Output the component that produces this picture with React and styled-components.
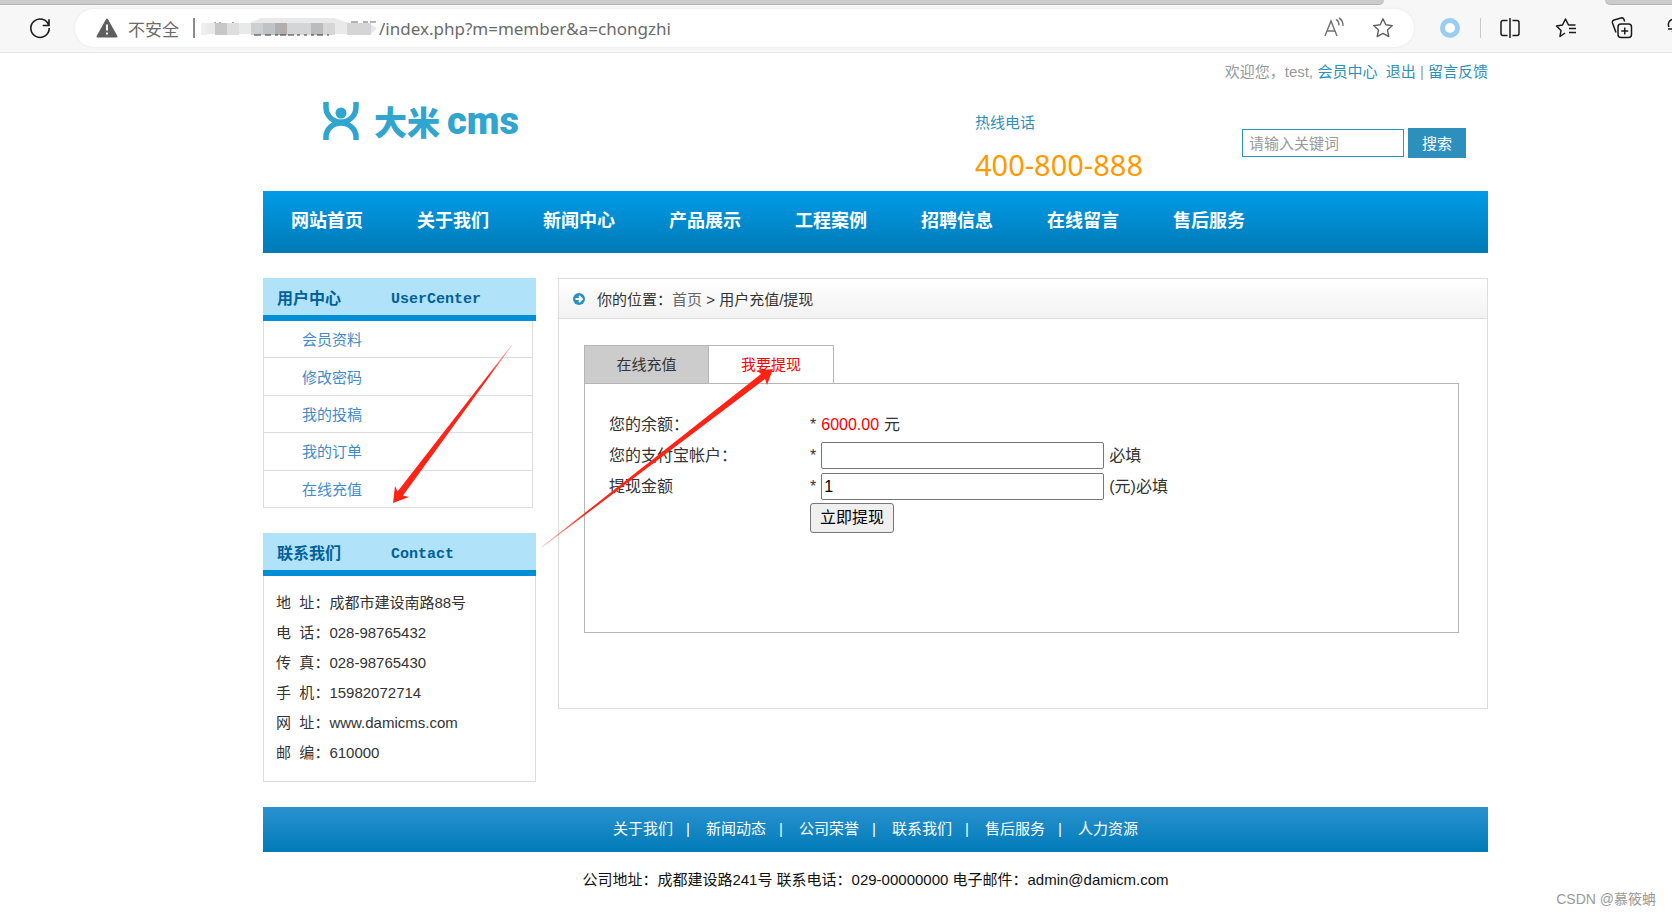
import React, { useState } from 'react'
import styled, { createGlobalStyle } from 'styled-components'

const GlobalStyle = createGlobalStyle`
  * {
    box-sizing: border-box;
  }
  body {
    margin: 0;
    background: #fff;
    color: #333;
    font-family: "Liberation Sans", "Noto Sans CJK SC", sans-serif;
    font-size: 15px;
  }
  a {
    text-decoration: none;
  }
`

const menus = ['网站首页', '关于我们', '新闻中心', '产品展示', '工程案例', '招聘信息', '在线留言', '售后服务']
const userLinks = ['会员资料', '修改密码', '我的投稿', '我的订单', '在线充值']
const contacts = [
  ['地', '址', '成都市建设南路88号'],
  ['电', '话', '028-98765432'],
  ['传', '真', '028-98765430'],
  ['手', '机', '15982072714'],
  ['网', '址', 'www.damicms.com'],
  ['邮', '编', '610000'],
]
const footLinks = ['关于我们', '新闻动态', '公司荣誉', '联系我们', '售后服务', '人力资源']

const Browser = () => (
  <BrowserBar>
    <TabStrip>
      <TabEdge $grow />
      <TabEdge />
    </TabStrip>
    <Tools>
      <IconButton aria-label="reload">
        <svg width="24" height="24" viewBox="0 0 24 24" fill="none" stroke="#1b1b1b" strokeWidth="1.6">
          <path d="M20.8 9.5A9.2 9.2 0 1 0 21.2 12M21 3.2v6.3h-6.3" />
        </svg>
      </IconButton>
      <AddressBar>
        <svg width="22" height="20" viewBox="0 0 22 20">
          <path d="M11 1.5 20.5 18.5H1.5Z" fill="#5f5f5f" stroke="#5f5f5f" strokeWidth="2" strokeLinejoin="round" />
          <path d="M11 6.5v6M11 14.5v2" stroke="#fff" strokeWidth="2" />
        </svg>
        <Unsafe>不安全</Unsafe>
        <Bar />
        <Mosaic width="180" height="20" viewBox="0 0 180 20">
          <path d="M16 4v3M21 4v3M34 4v3" stroke="#555" />
          <path d="M152 4h7M164 4h5M171 4h6" stroke="#999" strokeWidth="1.5" />
          <path d="M2 5H50L62 0H135L150 5H170L178 10L172 16H2Z" fill="#e9e9e9" />
          <rect x="2" y="5" width="6" height="12" fill="#eeeeee" />
          <rect x="16" y="5" width="12" height="12" fill="#c6c8c8" />
          <rect x="28" y="5" width="12" height="12" fill="#dedede" />
          <rect x="52" y="5" width="12" height="12" fill="#cdd0d1" />
          <rect x="64" y="5" width="12" height="12" fill="#bfc2c7" />
          <rect x="76" y="5" width="12" height="12" fill="#b2aeae" />
          <rect x="88" y="5" width="24" height="12" fill="#d3d5d6" />
          <rect x="112" y="5" width="12" height="12" fill="#bcbcbc" />
          <rect x="124" y="5" width="12" height="12" fill="#d6d6d6" />
          <rect x="148" y="5" width="24" height="12" fill="#d5d5d5" />
          <path d="M55 17h7M66 17h6M76 17h3M81 17h6M89 17h6M98 17h3M105 17h3M112 17h3M118 17h6M128 17h2" stroke="#333" strokeWidth="1" />
        </Mosaic>
        <Url>/index.php?m=member&amp;a=chongzhi</Url>
        <IconButton aria-label="read aloud">
          <svg width="22" height="22" viewBox="0 0 22 22" fill="none" stroke="#707070" strokeWidth="1.4">
            <path d="M2 19 8 4l6 15M4 14h8M13 2.5c2 1 3 3 3 6M16 1c3 1.5 4 4 4 8" />
          </svg>
        </IconButton>
        <IconButton aria-label="favorite">
          <Star color="#606060" />
        </IconButton>
      </AddressBar>
      <IconButton aria-label="extension">
        <svg width="20" height="20" viewBox="0 0 20 20">
          <circle cx="10" cy="10" r="7.5" fill="#fff" stroke="#99cdf1" strokeWidth="5" />
        </svg>
      </IconButton>
      <Divider />
      <Actions>
        <IconButton aria-label="split screen">
          <svg width="22" height="22" viewBox="0 0 22 22" fill="none" stroke="#1b1b1b" strokeWidth="1.5">
            <path d="M8.5 3.5H4a2 2 0 0 0-2 2v11a2 2 0 0 0 2 2h4.5M13.5 3.5H18a2 2 0 0 1 2 2v11a2 2 0 0 1-2 2h-4.5M11 1v20" />
          </svg>
        </IconButton>
        <IconButton aria-label="favorites list">
          <svg width="22" height="22" viewBox="0 0 22 22" fill="none" stroke="#1b1b1b" strokeWidth="1.5" strokeLinejoin="round">
            <path d="M10 16 5 19.5l1-6L1.5 9l6-1L10.5 2l3 6h7M14 11.5h7M14 15.5h7" />
          </svg>
        </IconButton>
        <IconButton aria-label="collections">
          <svg width="22" height="22" viewBox="0 0 22 22" fill="none" stroke="#1b1b1b" strokeWidth="1.5">
            <rect x="7" y="7" width="13.5" height="13.5" rx="3" />
            <path d="M13.75 10.5v7M10.25 14h7M5 15.5 1.5 6a2.5 2.5 0 0 1 1.5-3l7-2a2.5 2.5 0 0 1 3 1.5l.7 2" />
          </svg>
        </IconButton>
        <IconButton aria-label="essentials">
          <svg width="22" height="22" viewBox="0 0 22 22" fill="none" stroke="#1b1b1b" strokeWidth="1.5">
            <path d="M2 10a5 5 0 0 1 9-5 5 5 0 0 1 9 5M1 12h5l2-3 3 6 2-3M5 14l6 6 6-6" />
          </svg>
        </IconButton>
      </Actions>
    </Tools>
  </BrowserBar>
)

const Star = ({ color }) => (
  <svg width="22" height="22" viewBox="0 0 22 22" fill="none" stroke={color} strokeWidth="1.4" strokeLinejoin="round">
    <path d="m11 1.8 2.8 6 6.5.8-4.8 4.5 1.3 6.5L11 16.4l-5.8 3.2 1.3-6.5L1.7 8.6l6.5-.8Z" />
  </svg>
)

const Header = () => (
  <Top>
    <Welcome>
      欢迎您，test, <BlueLink href="#">会员中心</BlueLink>&nbsp; <BlueLink href="#">退出</BlueLink> | <BlueLink href="#">留言反馈</BlueLink>
    </Welcome>
    <Brand>
      <Logo href="#">
        <svg width="36" height="38" viewBox="0 0 36 38" fill="none" stroke="#2fa5cf">
          <path d="M3 0v5c0 9 7 15 15 15s15-6 15-15V0M3 38v-3c0-8 7-14 15-14s15 6 15 14v3" strokeWidth="5.5" />
          <circle cx="18" cy="11" r="5.5" fill="#2fa5cf" stroke="none" />
        </svg>
        <LogoName>大米</LogoName>
        <LogoCms>cms</LogoCms>
      </Logo>
      <Hotline>
        <span>热线电话</span>
        <Phone>400-800-888</Phone>
      </Hotline>
      <Search onSubmit={(e) => e.preventDefault()}>
        <SearchInput aria-label="请输入关键词" placeholder="请输入关键词" />
        <SearchButton>搜索</SearchButton>
      </Search>
    </Brand>
  </Top>
)

const Sidebar = () => (
  <Side>
    <section>
      <SideTitle>
        <span>用户中心</span>
        <span>UserCenter</span>
      </SideTitle>
      <SideList>
        {userLinks.map((item) => (
          <li key={item}>
            <a href="#">{item}</a>
          </li>
        ))}
      </SideList>
    </section>
    <section>
      <SideTitle>
        <span>联系我们</span>
        <span>Contact</span>
      </SideTitle>
      <ContactList>
        {contacts.map(([a, b, value]) => (
          <li key={a}>
            {a}&nbsp; {b}：{value}
          </li>
        ))}
      </ContactList>
    </section>
  </Side>
)

const Withdraw = () => {
  const [tab, setTab] = useState(1)
  const [money, setMoney] = useState('1')
  return (
    <Panel>
      <Crumb>
        <svg width="12" height="12" viewBox="0 0 12 12">
          <circle cx="6" cy="6" r="6" fill="#2d8fbb" />
          <path d="M2.5 6H9M6 3l3 3-3 3" fill="none" stroke="#fff" strokeWidth="1.8" />
        </svg>
        <span>
          你的位置：<a href="#">首页</a> &gt; 用户充值/提现
        </span>
      </Crumb>
      <PanelBody>
        <Tabs>
          {['在线充值', '我要提现'].map((t, i) => (
            <Tab key={t} $on={tab === i} onClick={() => setTab(i)}>
              {t}
            </Tab>
          ))}
        </Tabs>
        <Form onSubmit={(e) => e.preventDefault()}>
          <Row>
            <span>您的余额：</span>
            <Field>
              * <Money>6000.00</Money> 元
            </Field>
          </Row>
          <Row>
            <label htmlFor="account">您的支付宝帐户：</label>
            <Field>
              * <TextInput id="account" /> 必填
            </Field>
          </Row>
          <Row>
            <label htmlFor="money">提现金额</label>
            <Field>
              * <TextInput id="money" value={money} onChange={(e) => setMoney(e.target.value)} /> (元)必填
            </Field>
          </Row>
          <Row>
            <span />
            <Submit>立即提现</Submit>
          </Row>
        </Form>
      </PanelBody>
    </Panel>
  )
}

const App = () => {
  return (
    <Page>
      <GlobalStyle />
      <Browser />
      <Site>
        <Header />
        <Nav>
          {menus.map((item) => (
            <a href="#" key={item}>{item}</a>
          ))}
        </Nav>
        <Main>
          <Sidebar />
          <Withdraw />
        </Main>
        <FootNav>
          {footLinks.map((item, i) => (
            <React.Fragment key={item}>
              {i > 0 && <i>|</i>}
              <a href="#">{item}</a>
            </React.Fragment>
          ))}
        </FootNav>
        <Address>公司地址：成都建设路241号 联系电话：029-00000000 电子邮件：admin@damicm.com</Address>
      </Site>
      <Arrows width="400" height="220" viewBox="390 340 400 220">
        <defs>
          <linearGradient id="down" gradientUnits="userSpaceOnUse" x1="512" y1="345" x2="393" y2="503">
            <stop offset="0" stopColor="#ff2315" stopOpacity="0.3" />
            <stop offset="0.2" stopColor="#ff2315" />
          </linearGradient>
          <linearGradient id="up" gradientUnits="userSpaceOnUse" x1="540" y1="548" x2="773" y2="370">
            <stop offset="0" stopColor="#ff2315" stopOpacity="0.3" />
            <stop offset="0.2" stopColor="#ff2315" />
          </linearGradient>
        </defs>
        <path d="M511.8 344.8 397.5 491.5 395 486 393 503 409 497 403 495.5 512.3 345.2Z" fill="url(#down)" />
        <path d="M541.8 546.8 761 374 757 370.5 773 369 767 385 765 379 542.2 547.3Z" fill="url(#up)" />
      </Arrows>
      <Watermark>CSDN @慕筱蚺</Watermark>
    </Page>
  )
}

export default App

const Page = styled.div`
  position: relative;
  min-height: 100vh;
`
const BrowserBar = styled.div`
  display: flex;
  flex-direction: column;
  height: 53px;
  background: #f7f7f7;
  border-bottom: 1px solid #e8e8e8;
  overflow: hidden;
`
const TabStrip = styled.div`
  display: flex;
  justify-content: space-between;
  gap: 221px;
  height: 5px;
`
const TabEdge = styled.div`
  flex: ${(p) => (p.$grow ? '1' : '0 0 67px')};
  background: #cbcbcb;
  border-bottom: 1px solid #b5b5b5;
  border-radius: ${(p) => (p.$grow ? '0 0 5px 0' : '0 0 0 5px')};
`
const Tools = styled.div`
  display: flex;
  align-items: center;
  height: 48px;
  padding-left: 28px;
  margin-right: -17px;
`
const Actions = styled.div`
  display: flex;
  gap: 34px;
`
const IconButton = styled.button`
  display: flex;
  flex: none;
  align-items: center;
  justify-content: center;
  padding: 0;
  border: 0;
  background: none;
`
const AddressBar = styled.div`
  flex: 1;
  display: flex;
  align-items: center;
  height: 38px;
  margin: 0 26px 0 23px;
  padding: 0 20px 0 21px;
  border-radius: 19px;
  background: #fff;
  box-shadow: 0 0 3px #e4e4e4;
  color: #6b6b6b;
  font-size: 17px;
  ${IconButton} + ${IconButton} {
    margin-left: 27px;
  }
`
const Unsafe = styled.span`
  margin: 0 14px 0 10px;
`
const Bar = styled.i`
  flex: none;
  width: 2px;
  height: 20px;
  background: #8a8a8a;
`
const Divider = styled(Bar)`
  width: 1px;
  margin: 0 18px 0 20px;
  background: #c8c8c8;
`
const Mosaic = styled.svg`
  flex: none;
  margin-left: 4px;
`
const Url = styled.span`
  flex: 1;
  font-family: "Noto Sans", "Noto Sans CJK SC", sans-serif;
`
const Site = styled.div`
  padding: 0 184px 0 263px;
`
const Top = styled.header`
  height: 138px;
`
const Welcome = styled.div`
  padding-top: 8px;
  line-height: 22px;
  text-align: right;
  color: #999;
`
const BlueLink = styled.a`
  color: #2d8fbb;
`
const Brand = styled.div`
  display: flex;
  align-items: flex-start;
`
const Logo = styled.a`
  display: flex;
  align-items: center;
  margin: 19px auto 0 60px;
  color: #2fa5cf;
  line-height: 38px;
`
const LogoName = styled.span`
  margin: 0 7px 0 15px;
  font-family: "Noto Sans CJK SC", sans-serif;
  font-size: 33px;
  font-weight: 900;
`
const LogoCms = styled.span`
  font-family: Roboto, "Liberation Sans", sans-serif;
  font-size: 38px;
  font-weight: 900;
`
const Hotline = styled.div`
  display: flex;
  flex-direction: column;
  width: 169px;
  margin: 29px 98px 0 0;
  line-height: 22px;
  color: #2d8fbb;
`
const Phone = styled.strong`
  margin-top: 11px;
  font: 29px/40px "Noto Sans", sans-serif;
  color: #f90;
`
const Search = styled.form`
  display: flex;
  align-items: center;
  gap: 4px;
  margin: 45px 22px 0 0;
`
const SearchInput = styled.input`
  width: 162px;
  height: 28px;
  padding: 0 6px;
  border: 1px solid #2d8fbb;
  font: inherit;
  &::placeholder {
    color: #999;
  }
`
const SearchButton = styled.button`
  width: 58px;
  height: 30px;
  padding: 0 0 1px;
  border: 0;
  background: #2d8fbb;
  color: #fff;
  font: inherit;
`
const Nav = styled.nav`
  display: flex;
  height: 62px;
  padding-left: 1px;
  background: linear-gradient(#009be8, #007ab5);
  a {
    padding: 0 27px;
    font-size: 18px;
    font-weight: bold;
    line-height: 60px;
    color: #fff;
  }
`
const Main = styled.main`
  display: flex;
  align-items: flex-start;
  gap: 22px;
  padding: 25px 0;
`
const Side = styled.aside`
  display: flex;
  flex-direction: column;
  flex: none;
  gap: 25px;
  width: 273px;
`
const SideTitle = styled.h3`
  display: flex;
  height: 43px;
  margin: 0;
  padding-left: 14px;
  background: #b0e2f9;
  border-bottom: 6px solid #008fd7;
  color: #00609a;
  font: bold 15px/44px "Liberation Mono", "Noto Sans CJK SC", monospace;
  span:first-child {
    width: 114px;
    font-size: 16px;
  }
`
const SideList = styled.ul`
  display: grid;
  grid-auto-rows: 1fr;
  width: 270px;
  height: 187px;
  margin: 0;
  padding: 0;
  list-style: none;
  border: solid #ddd;
  border-width: 0 1px;
  li {
    display: flex;
    align-items: center;
    padding: 0 0 1px 38px;
    border-bottom: 1px solid #ddd;
  }
  a {
    color: #428bca;
  }
`
const ContactList = styled.ul`
  margin: 0;
  padding: 12px 12px 13px;
  list-style: none;
  border: 1px solid #ddd;
  border-top: 0;
  line-height: 30px;
`
const Panel = styled.section`
  flex: 1;
  min-height: 431px;
  border: 1px solid #ddd;
`
const Crumb = styled.div`
  display: flex;
  align-items: center;
  gap: 12px;
  height: 40px;
  padding-left: 14px;
  border-bottom: 1px solid #ddd;
  background: linear-gradient(#fff, #f2f2f2);
  a {
    color: #666;
  }
`
const PanelBody = styled.div`
  padding: 26px 28px 0 25px;
`
const Tabs = styled.div`
  display: flex;
`
const Tab = styled.button`
  width: 125px;
  height: 38px;
  padding: 0 0 2px;
  border: 1px solid #b5b5b5;
  border-bottom: 0;
  background: ${(p) => (p.$on ? '#fff' : '#ccc')};
  color: ${(p) => (p.$on ? '#f00' : '#333')};
  font: inherit;
  & + & {
    border-left-width: 0;
  }
`
const Form = styled.form`
  min-height: 250px;
  padding: 25px 24px;
  border: 1px solid #b5b5b5;
  font-size: 16px;
`
const Row = styled.div`
  display: grid;
  grid-template-columns: 201px 1fr;
  align-items: center;
  height: 31px;
  line-height: 20px;
`
const Field = styled.div`
  display: flex;
  align-items: center;
  gap: 5px;
  white-space: nowrap;
`
const Money = styled.span`
  color: #f00;
`
const TextInput = styled.input`
  width: 283px;
  height: 27px;
  padding: 0 2px;
  border: 1px solid #767676;
  border-radius: 2px;
  font: inherit;
  color: #000;
`
const Submit = styled.button`
  width: 84px;
  height: 30px;
  padding: 0;
  border: 1px solid #767676;
  border-radius: 3px;
  background: #efefef;
  font: inherit;
  color: #000;
`
const FootNav = styled.nav`
  display: flex;
  justify-content: center;
  height: 45px;
  background: linear-gradient(#2a92cf, #007bb8);
  color: #fff;
  line-height: 44px;
  a {
    color: #fff;
  }
  i {
    width: 33px;
    padding-left: 13px;
    font-style: normal;
  }
`
const Address = styled.footer`
  padding-top: 17px;
  line-height: 22px;
  text-align: center;
  color: #111;
`
const Arrows = styled.svg`
  position: absolute;
  left: 390px;
  top: 340px;
  pointer-events: none;
`
const Watermark = styled.div`
  position: absolute;
  right: 16px;
  bottom: 6px;
  font-size: 14px;
  line-height: 22px;
  color: #999;
`
